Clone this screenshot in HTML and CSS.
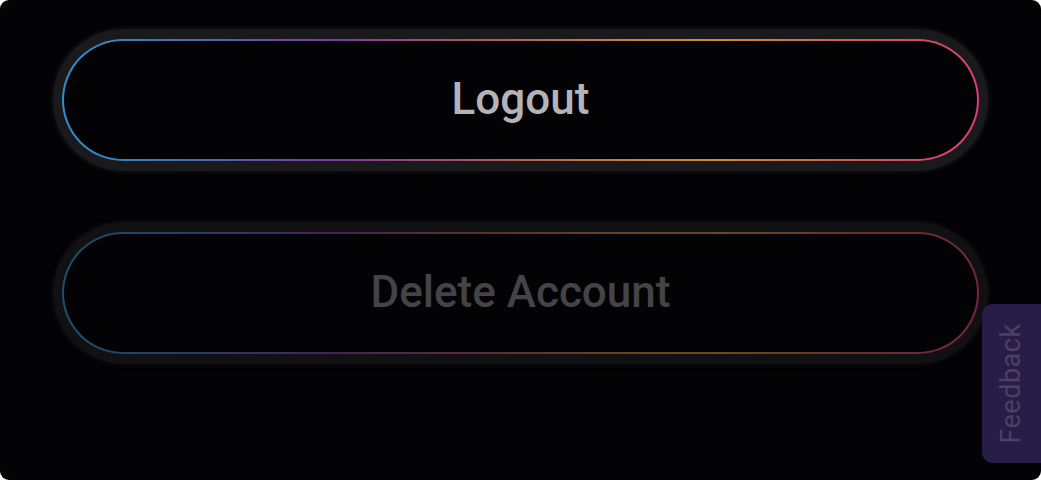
FILE: index.html
```html
<!DOCTYPE html>
<html>
<head>
<meta charset="utf-8">
<link rel="stylesheet" href="styles.css">
</head>
<body>
<div class="screen">
  <div class="actions">
    <div class="ring">
      <button class="btn">Logout</button>
    </div>
    <div class="ring ring--dim">
      <button class="btn btn--dim">Delete Account</button>
    </div>
  </div>
  <div class="feedback"><span class="feedback-label">Feedback</span></div>
</div>
</body>
</html>
```

FILE: styles.css
```css
html, body {
  margin: 0;
  padding: 0;
  background: #ffffff;
}
body {
  width: 1041px;
  height: 480px;
  overflow: hidden;
}
.screen {
  position: relative;
  width: 1041px;
  height: 480px;
  background: #030205;
  border-radius: 9px;
  overflow: hidden;
  font-family: Roboto, "Liberation Sans", sans-serif;
}
.actions {
  display: flex;
  flex-direction: column;
  gap: 51px;
  padding: 29px 53px 0 53px;
}
.ring {
  height: 142px;
  box-sizing: border-box;
  padding: 10px 9px;
  border-radius: 71px;
  background: #1a191c;
  box-shadow: 0 0 4px 1px #151417;
}
.ring--dim {
  background: #111013;
  box-shadow: 0 0 4px 1px #0d0c0f;
}
.btn {
  display: flex;
  align-items: center;
  justify-content: center;
  width: 100%;
  height: 100%;
  box-sizing: border-box;
  border: 2px solid transparent;
  border-radius: 61px;
  background:
    linear-gradient(#030205, #030205) padding-box,
    linear-gradient(90deg, #2e90c8 0%, #4a6ab0 15%, #7a3e98 30%, #a85a62 46%, #c8803e 62%, #d08a38 72%, #c85a58 88%, #e03a7a 100%) border-box;
  color: #b4b4b8;
  font-family: Roboto, "Liberation Sans", sans-serif;
  font-size: 44px;
  font-weight: 500;
  padding: 0 0 3px 0;
  cursor: pointer;
}
.btn--dim {
  background:
    linear-gradient(#030205, #030205) padding-box,
    linear-gradient(90deg, #1a5070 0%, #2a3c66 15%, #442458 30%, #5a3036 46%, #6a4422 62%, #6c4a1a 72%, #663030 88%, #762444 100%) border-box;
  color: #444348;
}
.feedback {
  position: absolute;
  left: 982px;
  top: 304px;
  width: 70px;
  height: 159px;
  background: #281d48;
  border-radius: 11px 0 0 11px;
  display: flex;
  align-items: center;
  justify-content: flex-start;
}
.feedback-label {
  margin-left: 14px;
  transform: rotate(-90deg);
  transform-origin: center;
  width: 31px;
  white-space: nowrap;
  color: #4a4260;
  font-size: 27px;
  letter-spacing: 0.5px;
  line-height: 31px;
  display: flex;
  justify-content: center;
}
```
